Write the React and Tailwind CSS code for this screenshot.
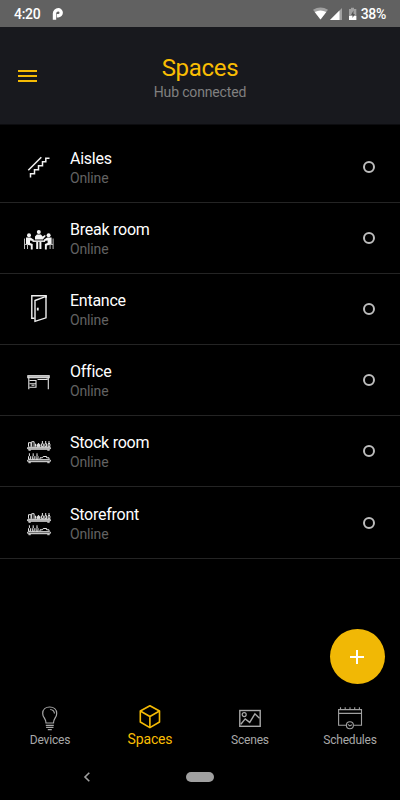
import React from 'react'

const StairsIcon = () => (
    <svg className="w-10 h-10" viewBox="0 0 40 40" fill="none" stroke="#f0f0f0" strokeWidth="1.5">
        <path d="M9.3 23.3 22.3 10.3" />
        <path d="M11.5 30.5v-3.7h4v-4h4v-4h4v-4h3.3v-3.6h3.7" />
    </svg>
)

const MeetingIcon = () => (
    <svg className="w-10 h-10" viewBox="0 0 40 40" fill="#f4f4f4">
        <circle cx="10" cy="17.2" r="2" />
        <circle cx="19.8" cy="14" r="2" />
        <circle cx="29.6" cy="17.2" r="2" />
        <path d="M16 21.5v-3l1.9-1.9h4l1.7 1.9 2.3-1.500.8 1-2.9 3.5z" />
        <path d="M7 19.5h4.5l3.4 2.300-.4 1.300-3.500-.6v2.600l2.700 1v5.400h-1.900v-4L7 26.500z" />
        <path d="M32.600 19.500h-4.500l-3.400 2.300.4 1.300 3.500-.6v2.600l-2.700 1v5.400h1.900v-4l4.800-1z" />
        <path d="M13.500 22.400h12.600v1.500H13.500z" />
        <path d="M17.200 24h2v7h-2zM20.400 24h2v7h-2z" />
        <path d="M5.500 20.500V31M8.500 26.500V31M34.100 20.500V31M31.100 26.500V31M5.500 26.400h3M34.100 26.400h-3" stroke="#bdbdbd" strokeWidth="1" />
    </svg>
)

const DoorIcon = () => (
    <svg className="w-10 h-10" viewBox="0 0 40 40" fill="none" stroke="#f0f0f0" strokeWidth="1.4">
        <path d="M15.5 29.2h-2.700V6.800h14.300v2" />
        <path d="M16 11.500 27 7.400v21.400L16 32.300z" />
        <path d="M18.800 18.700v2.800" strokeWidth="1.8" />
    </svg>
)

const DeskIcon = () => (
    <svg className="w-10 h-10" viewBox="0 0 40 40" fill="none" stroke="#e4e4e4" strokeWidth="1.1">
        <rect x="8.8" y="15.7" width="21.4" height="2" fill="#aaaaaa" />
        <path d="M9.8 18v11.300M29.300 18v11.300M28 18.500v1H18.500" />
        <path d="M10.500 20.500h6.500v6.800h-6.700M10.500 23.700h6.500M12.500 25.300h3" />
    </svg>
)

const ShelfIcon = () => (
    <svg className="w-10 h-10" viewBox="0 0 40 40" fill="none" stroke="#e6e6e6" strokeWidth="1" strokeLinejoin="round">
        <path d="M9.500 15.700v-4h2.500v4M12.700 15.700v-5h2.400v5M16.500 15.700v-3" />
        <path d="M18 15.300v-1.500l1.500-1.500 1.500 1.500v1.500z" fill="#dddddd" />
        <path d="M23.400 10v2l-.8 1v2.700h1.700V13l-.8-1M26.700 10v2l-.8 1v2.700h1.700V13l-.8-1M30 10v2l-.8 1v2.700h1.700V13l-.8-1" />
        <rect x="8.500" y="16.200" width="23" height="2" rx="1" fill="#999999" />
        <path d="M9.500 19.200h2.300M28.300 19.200h2.300" />
        <path d="M10.400 22.300v2.200l-.9 1v2.700h1.900v-2.700l-.9-1M14.200 22.300v2.200l-.9 1v2.700h1.900v-2.700l-.9-1M18 22.300v2.200l-.9 1v2.700H19v-2.700l-.9-1" />
        <path d="M21 28v-1.200h2.500l.7-1.300h3.400v1.300H30V28" />
        <rect x="8.500" y="28.700" width="23" height="2" rx="1" fill="#555555" />
        <path d="M9.500 31.700h2.300M28.300 31.700h2.300" />
    </svg>
)

const BulbIcon = () => (
    <svg className="w-8 h-8" viewBox="0 0 32 32" fill="none" stroke="#a8a8a8" strokeWidth="1.2">
        <path d="M12 22c0-4.800-3.300-5.300-3.300-9.600C8.700 8.300 11.800 6 15.700 6s7 2.300 7 6.400c0 4.300-3.200 4.800-3.200 9.600z" />
        <path d="M16.200 8.500c2.400.2 4 1.700 4.300 4" />
        <path d="M11.800 24.300h8M12.100 26.400h7.400M13.800 28.600h4" />
    </svg>
)

const CubeIcon = () => (
    <svg className="w-8 h-8" viewBox="0 0 32 32" fill="none" stroke="#f5bb05" strokeWidth="1.6" strokeLinejoin="round">
        <path d="M15.900 4.800 25.500 10v11L15.900 26.600 6.300 21V10z" />
        <path d="M6.300 10 15.900 15.500 25.500 10M15.900 15.500v11" />
    </svg>
)

const PictureIcon = () => (
    <svg className="w-8 h-8" viewBox="0 0 32 32" fill="none" stroke="#a8a8a8" strokeWidth="1.4">
        <rect x="5.800" y="9.500" width="20.400" height="15.800" />
        <circle cx="10.200" cy="13.600" r="2" strokeWidth="1.2" />
        <path d="M6.800 23.300 11.200 17.900l4.500 3.500 5.200-8.600 4.600 4.500" />
    </svg>
)

const CalendarIcon = () => (
    <svg className="w-8 h-8" viewBox="0 0 32 32" fill="none" stroke="#a0a0a0" strokeWidth="1.1">
        <path d="M12.200 24.200H4.600V8.600h22.900v15.600h-7.800M4.600 12.400h22.900" />
        <path d="M6.500 6.200v2.500M11.200 6.200v2.500M16 6.200v2.500M20.700 6.200v2.500M25.400 6.200v2.500" />
        <circle cx="15.900" cy="24.300" r="3.500" />
        <path d="m13.900 23.400 1.900 1.500 2.100-1.200" />
    </svg>
)

const spaces = [
    { name: 'Aisles', Icon: StairsIcon },
    { name: 'Break room', Icon: MeetingIcon },
    { name: 'Entance', Icon: DoorIcon },
    { name: 'Office', Icon: DeskIcon },
    { name: 'Stock room', Icon: ShelfIcon },
    { name: 'Storefront', Icon: ShelfIcon },
]

const tabs = [
    { name: 'Devices', Icon: BulbIcon },
    { name: 'Spaces', Icon: CubeIcon, active: true },
    { name: 'Scenes', Icon: PictureIcon },
    { name: 'Schedules', Icon: CalendarIcon },
]

const StatusBar = () => (
    <div className="h-[27px] shrink-0 bg-[#616161] text-white flex items-center justify-between pl-[14px] pr-[14px] pt-px text-[14px] tracking-[-0.3px] font-medium">
        <div className="flex items-center">
            <span>4:20</span>
            <svg className="ml-3 w-3 h-[14px]" viewBox="0 0 12 14" fill="none" stroke="#ffffff">
                <path d="M2.500 12.700V6.500A3.700 3.700 0 0 1 6.200 2.800a3 3 0 0 1 0 6H4.800" strokeWidth="3.400" />
            </svg>
        </div>
        <div className="flex items-center">
            <svg className="w-[46px] h-[14px]" viewBox="0 0 46 14" fill="#ffffff">
                <path d="M0 2.800Q7.500-1.800 15 2.800L7.500 12.500z" fill="#a0a0a0" />
                <path d="M1.700 5Q7.500 1.800 13.300 5L7.500 12.500z" />
                <path d="M29 1v12H17z" fill="#a0a0a0" />
                <path d="M26.500 3.500V13H17z" />
                <path d="M36 2h2V.7h3V2h2.300v11H36z" fill="#a0a0a0" />
                <path d="M36 9h7.300v4H36z" />
                <path d="M40.500 3.500 38 8h1.500v3L42 7h-1.500z" fill="#555555" />
            </svg>
            <span className="ml-[2px]">38%</span>
        </div>
    </div>
)

const Header = () => (
    <header className="h-[98px] shrink-0 bg-[#18191e] border-b border-[#0c0c0f] grid grid-cols-[56px_1fr_56px] items-center">
        <button className="ml-[18px] w-[19px] flex flex-col gap-[3px]">
            <span className="h-[2px] bg-[#f5bb05]" />
            <span className="h-[2px] bg-[#f5bb05]" />
            <span className="h-[2px] bg-[#f5bb05]" />
        </button>
        <div className="text-center pt-[5px]">
            <h1 className="text-[24px] tracking-[-0.3px] leading-7 text-[#f9bd03]">Spaces</h1>
            <p className="text-[14px] tracking-[-0.15px] leading-5 text-[#808080]">Hub connected</p>
        </div>
    </header>
)

const SpaceRow = ({ name, Icon }) => (
    <li className="h-[71.1px] flex items-center border-b border-[#242424] pl-[19px] pr-[25px]">
        <Icon />
        <div className="ml-[11px] pt-[3px] flex-1">
            <p className="text-[16px] tracking-[-0.25px] leading-5 text-white">{name}</p>
            <p className="text-[14px] tracking-[-0.15px] leading-[19px] text-[#626262]">Online</p>
        </div>
        <span className="w-3 h-3 rounded-full border-2 border-[#bdbdbd]" />
    </li>
)

const App = () => {
    return (
        <div className="w-[400px] h-[800px] bg-black flex flex-col overflow-hidden font-['Roboto',sans-serif]">
            <StatusBar />
            <Header />
            <ul className="pt-[7px] flex-1">
                {spaces.map((space) => <SpaceRow key={space.name} {...space} />)}
            </ul>

            <div className="flex justify-end pr-[15.5px]">
                <button className="w-[54.5px] h-[55px] rounded-full bg-[#f1b805] flex items-center justify-center">
                    <svg className="w-[14px] h-[14px]" viewBox="0 0 14 14" stroke="#ffffff" strokeWidth="2">
                        <path d="M7 0v14M0 7h14" />
                    </svg>
                </button>
            </div>

            <nav className="mt-[17px] h-[52px] grid grid-cols-4 shrink-0">
                {tabs.map(({ name, Icon, active }) => (
                    <div key={name} className="flex flex-col items-center">
                        <Icon />
                        <span className={active ? 'text-[14px] tracking-[-0.15px] leading-[13px] text-[#f9bd03]' : 'text-[12px] tracking-[-0.2px] leading-[14px] text-[#a8a8a8]'}>{name}</span>
                    </div>
                ))}
            </nav>

            <div className="h-[47px] shrink-0 grid grid-cols-3 items-center pl-[20px] pr-[20px]">
                <svg className="w-2 h-[10px] ml-[63px]" viewBox="0 0 8 10" fill="none" stroke="#a0a0a0" strokeWidth="1.6">
                    <path d="M6.300.8 2 5l4.300 4.200" />
                </svg>
                <span className="justify-self-center w-7 h-[10px] rounded-full bg-[#a0a0a0]" />
            </div>
        </div>
    )
}

export default App
